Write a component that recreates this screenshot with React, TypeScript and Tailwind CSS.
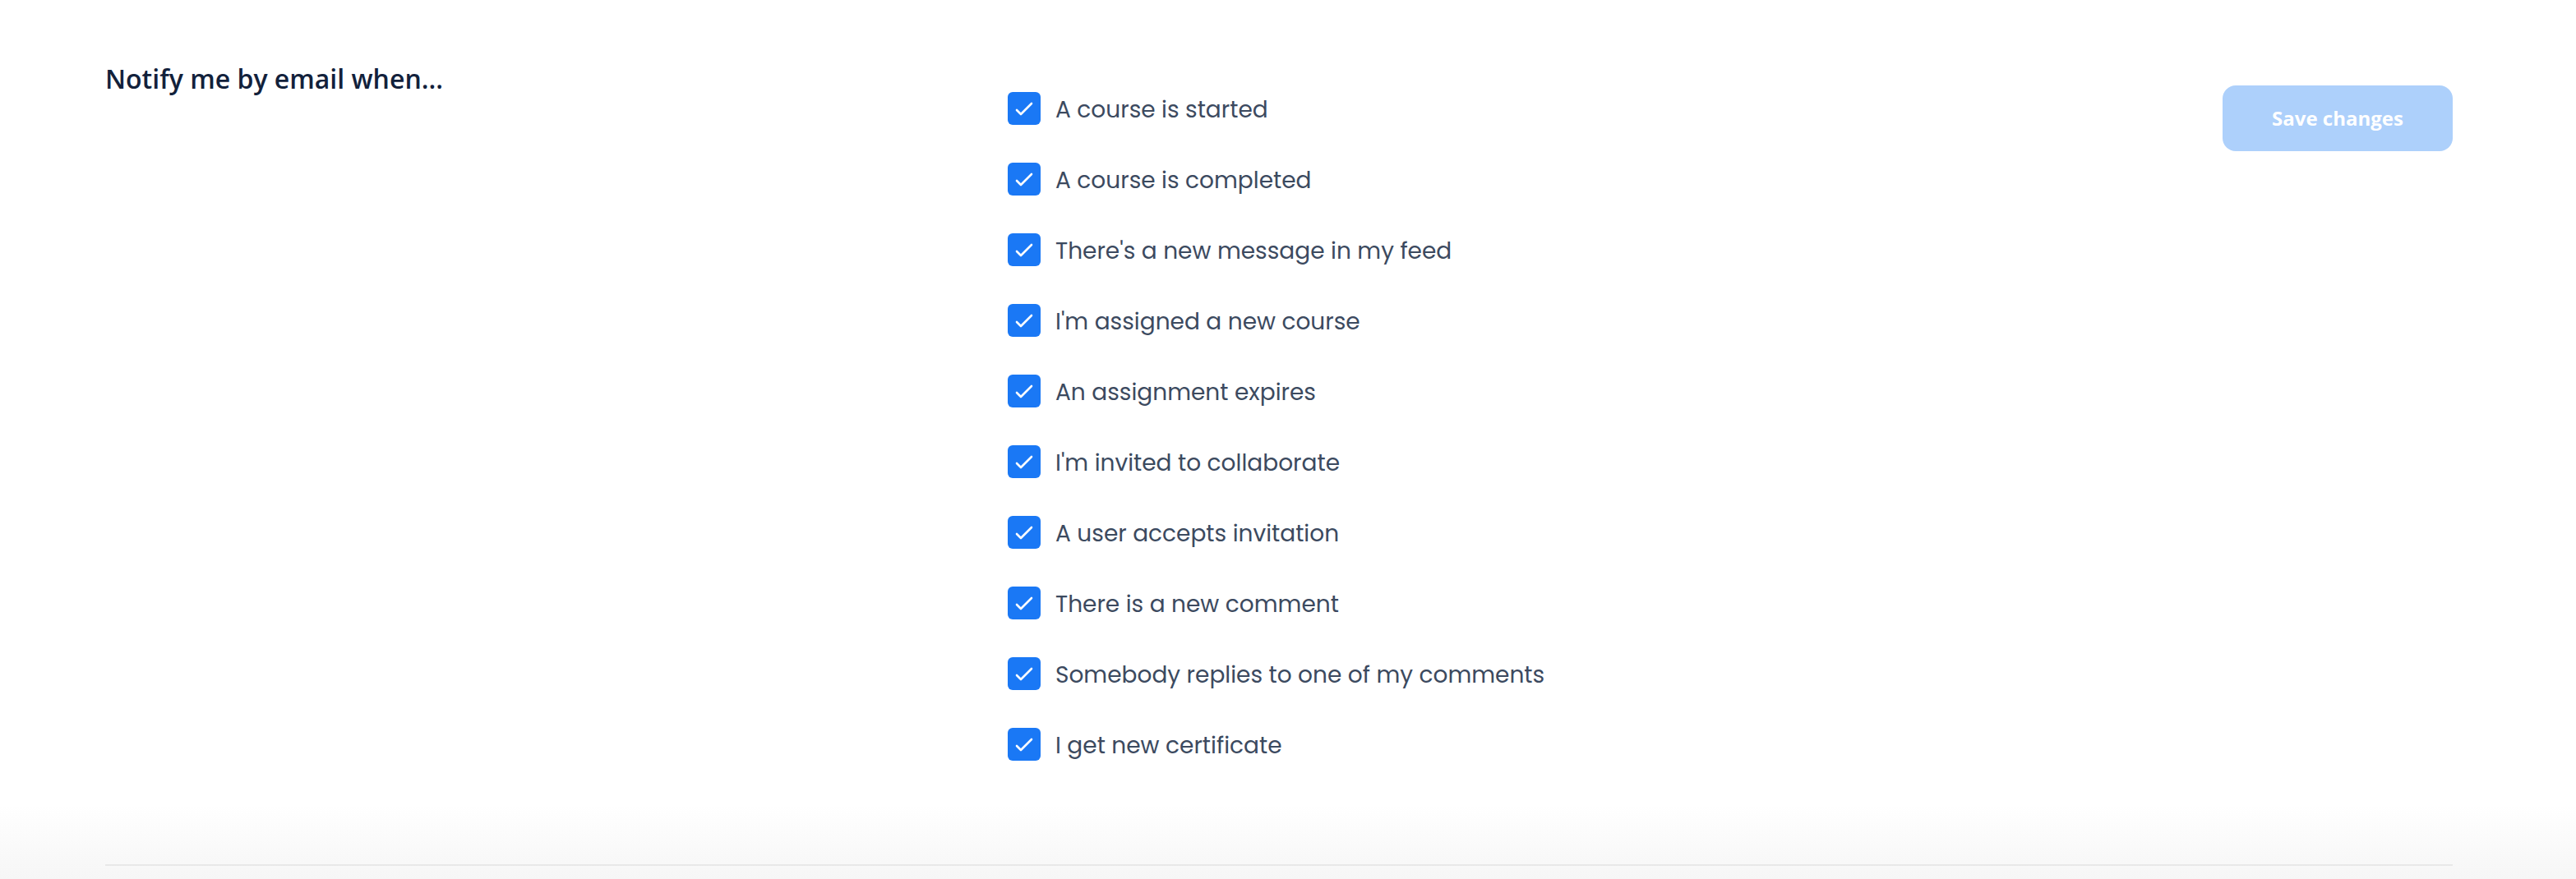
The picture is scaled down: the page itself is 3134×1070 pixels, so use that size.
const OPTIONS = [
  "A course is started",
  "A course is completed",
  "There's a new message in my feed",
  "I'm assigned a new course",
  "An assignment expires",
  "I'm invited to collaborate",
  "A user accepts invitation",
  "There is a new comment",
  "Somebody replies to one of my comments",
  "I get new certificate",
];

function CheckRow({ label }: { label: string }) {
  return (
    <label className="flex h-[86px] items-center gap-[18px] cursor-pointer">
      <span className="flex h-[40px] w-[40px] shrink-0 items-center justify-center rounded-[6px] bg-[#1a78f5]">
        <svg viewBox="0 0 40 40" className="h-[40px] w-[40px]" fill="none">
          <path d="M11 22l5 5 13-13" stroke="white" strokeWidth={2.6} strokeLinecap="round" strokeLinejoin="round" />
        </svg>
      </span>
      <span className="mt-[3px] font-['Poppins','Inter',sans-serif] text-[28px] leading-none text-[#3c4a5f]">
        {label}
      </span>
    </label>
  );
}

export default function App() {
  return (
    <div className="h-[1070px] w-[3134px] overflow-hidden bg-[linear-gradient(to_bottom,#ffffff_980px,#f6f6f6_1070px)]">
      <div className="pl-[128px] pr-[150px] pt-[74px]">
        <div className="flex items-start">
          <h2 className="w-[1098px] shrink-0 font-['Open_Sans',sans-serif] text-[32px] font-semibold leading-[44px] text-[#12213b]">
            Notify me by email when...
          </h2>

          <div className="mt-[15px] flex flex-1 flex-col">
            {OPTIONS.map((o) => (
              <CheckRow key={o} label={o} />
            ))}
          </div>

          <button className="mt-[30px] h-[80px] w-[280px] rounded-[16px] bg-[#add0fb] font-['Open_Sans',sans-serif] text-[24px] font-bold text-white">
            Save changes
          </button>
        </div>

        <div className="mt-[103px] h-[2px] bg-[#e8e8e8]" />
      </div>
    </div>
  );
}
